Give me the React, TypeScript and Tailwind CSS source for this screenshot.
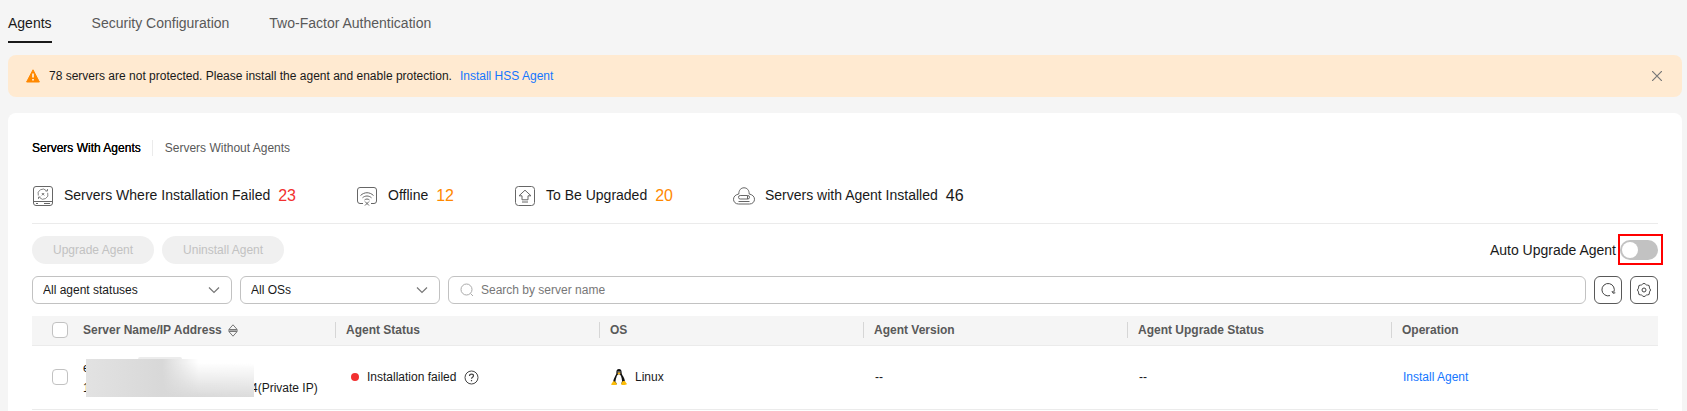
import React, { useState } from "react";

const TABS = ["Agents", "Security Configuration", "Two-Factor Authentication"];

const STATS = [
  { label: "Servers Where Installation Failed", count: 23, color: "text-[#f23030]", icon: "failed" },
  { label: "Offline", count: 12, color: "text-[#ff8800]", icon: "offline" },
  { label: "To Be Upgraded", count: 20, color: "text-[#ff8800]", icon: "upgrade" },
  { label: "Servers with Agent Installed", count: 46, color: "text-[#191919]", icon: "cloud" },
];

const COLUMNS = ["Agent Status", "OS", "Agent Version", "Agent Upgrade Status", "Operation"];

function StatIcon({ name }: { name: string }) {
  return (
    <svg width="22" height="22" viewBox="0 0 22 22" fill="none" stroke="#666" className="shrink-0">
      {name === "failed" && (
        <>
          <rect x="1.5" y="1.5" width="19" height="19" rx="2.5" />
          <path d="M1.5 16.5h19M4 18.5h2M12 18.5h6" />
          <path d="M6.300 10.500a4.800 4.800 0 0 1 8.200-4.700M15.700 7.800a4.800 4.800 0 0 1-8.200 4.700M15.500 4v2h-2M6.500 14v-2h2" strokeWidth="0.8" />
          <path d="M9.800 8l2.400 2.400M12.200 8l-2.400 2.400" strokeWidth="0.9" />
        </>
      )}
      {name === "offline" && (
        <>
          <path d="M7 18.5H4A2.5 2.5 0 0 1 1.5 16V5A2.5 2.5 0 0 1 4 2.5h14A2.5 2.5 0 0 1 20.5 5v11a2.5 2.5 0 0 1-2.5 2.5h-3" />
          <path d="M4.5 10.5c4-3.700 9-3.700 13 0M6.500 12.800c2.800-2.400 6.200-2.400 9 0M8.500 15c1.500-1.300 3.500-1.300 5 0" />
          <path d="M9 16.5l4 4M13 16.5l-4 4" />
        </>
      )}
      {name === "upgrade" && (
        <>
          <rect x="1.5" y="1.5" width="19" height="19" rx="3" />
          <path d="M11 5.2l6 5.600h-3v4H8v-4H5z" strokeLinejoin="round" />
          <path d="M8 17h6" />
        </>
      )}
      {name === "cloud" && (
        <>
          <path d="M5.800 9C5.800 5 8 2.800 11 2.800S16.200 5 16.200 9c3 .6 5.300 2.400 5.300 5.200 0 2.700-2 4.800-5 4.800h-11c-3 0-5-2.100-5-4.800C.5 11.400 2.800 9.600 5.800 9z" />
          <rect x="5.500" y="10.500" width="11" height="3.500" rx="1.700" />
          <path d="M5.500 16.500h11M14.500 11v3" />
        </>
      )}
    </svg>
  );
}

function Tux() {
  return (
    <svg width="16" height="16" viewBox="0 0 16 16" className="shrink-0">
      <path d="M8 0C6 0 5.300 1.400 5.400 3.200c.1 1.700-.5 2.600-1.400 4.200C3 9.200 2.300 11.200 2.200 13L5 15.500l1.500-1h3.600l1.500 1 2.300-2.700c0-2-.8-4-1.900-5.800-.8-1.300-1.400-2.200-1.400-3.800C10.600 1.400 10 0 8 0z" fill="#111" />
      <path d="M8 5.300c-1 0-1.600.6-2.200 2C5.100 9 4.600 10.600 4.500 12.200L6.300 16h3.600l1.200-3.900c-.1-1.700-.6-3.300-1.100-4.800C9.500 6 9 5.300 8 5.300z" fill="#fff" />
      <path d="M6.300 4.200L8 3.300l1.700.9L8 5.800z" fill="#fdb813" />
      <circle cx="7.100" cy="2.900" r=".6" fill="#ddd" />
      <circle cx="8.900" cy="2.900" r=".6" fill="#ddd" />
      <path d="M2.300 12c1 0 1.900.9 2.600 1.600.8.900 1.500 1.800.6 2.200-1 .4-4 .3-5.500 0 .3-1.100 1.200-1.900 2.300-3.800zM11.500 12.300c.6-.3 2.200-.4 2.600 0 .3.800 1.100 1.700 1.900 2.600-.8 1-3.500 1.200-5 1.100-.7-.1-1-.6-.6-1.400z" fill="#fbbc09" />
    </svg>
  );
}

function FilterSelect({ label, option }: { label: string; option: string }) {
  return (
    <div className="relative w-[200px] shrink-0">
      <select aria-label={label} className="h-7 w-full appearance-none rounded-md border border-[#c2c2c2] bg-white px-2.5 text-xs text-[#191919]">
        <option>{option}</option>
      </select>
      <svg width="12" height="12" viewBox="0 0 12 12" fill="none" stroke="#777" strokeWidth="1.200" className="pointer-events-none absolute top-2 right-3">
        <path d="M1 3.500l5 5 5-5" />
      </svg>
    </div>
  );
}

function CheckBox({ label }: { label: string }) {
  return (
    <input type="checkbox" aria-label={label} className="block size-4 appearance-none rounded-[4px] border border-[#c2c2c2] bg-white checked:bg-[#191919]" />
  );
}

export default function App() {
  const [showBanner, setShowBanner] = useState(true);
  const [autoUpgrade, setAutoUpgrade] = useState(false);

  return (
    <div className="flex min-h-screen flex-col bg-[#f5f5f5] pr-[5px] pl-2 font-['Liberation_Sans',Arial,sans-serif] text-xs text-[#191919]">
      <nav className="flex gap-10 text-sm">
        {TABS.map((tab, idx) => (
          <a
            key={tab}
            href="#"
            className={idx === 0 ? "border-b-2 border-[#191919] pt-[13px] pb-2" : "pt-[13px] pb-2 text-[#595959]"}
          >
            {tab}
          </a>
        ))}
      </nav>

      {showBanner && (
        <div className="mt-3 flex h-[42px] items-center rounded-lg bg-[#ffead1] pr-5 pl-[18px]">
          <svg width="14" height="14" viewBox="0 0 14 14" className="mr-[9px] shrink-0">
            <path d="M7 .8L13.400 13H.6z" fill="#ff8800" stroke="#ff8800" strokeLinejoin="round" />
            <path d="M7 4.500v4M7 10v1.500" stroke="#fff" strokeWidth="1.500" />
          </svg>
          <span>78 servers are not protected. Please install the agent and enable protection.</span>
          <a href="#" className="ml-2 text-[#1476ff]">Install HSS Agent</a>
          <button type="button" aria-label="Close" className="ml-auto" onClick={() => setShowBanner(false)}>
            <svg width="10" height="10" viewBox="0 0 10 10" stroke="#777" strokeWidth="1.200">
              <path d="M0 0l10 10M10 0L0 10" />
            </svg>
          </button>
        </div>
      )}

      <main className="mt-4 flex-1 rounded-t-lg bg-white px-6 pt-[27px]">
        <div className="flex h-4 items-center">
          <a href="#" className="text-black [text-shadow:0_0_0_#000]">Servers With Agents</a>
          <span className="mr-3 ml-[11px] h-4 w-px bg-[#ebebeb]" />
          <a href="#" className="text-[#595959]">Servers Without Agents</a>
        </div>

        <div className="flex h-[68px] items-center gap-[60px] border-b border-[#ebebeb] pt-3">
          {STATS.map((stat) => (
            <div key={stat.label} className="flex items-center">
              <StatIcon name={stat.icon} />
              <span className="ml-2.5 pb-0.5 text-sm">{stat.label}</span>
              <span className={`ml-2 text-base ${stat.color}`}>{stat.count}</span>
            </div>
          ))}
        </div>

        <div className="mt-3 flex items-center gap-2">
          <button type="button" disabled className="h-7 rounded-full bg-[#f0f0f0] px-[21px] text-[#c2c2c2]">Upgrade Agent</button>
          <button type="button" disabled className="h-7 rounded-full bg-[#f0f0f0] px-[21px] text-[#c2c2c2]">Uninstall Agent</button>
          <label htmlFor="auto-upgrade" className="ml-auto text-sm">Auto Upgrade Agent</label>
          <span className="relative -ml-1 flex">
            <input
              id="auto-upgrade"
              type="checkbox"
              role="switch"
              checked={autoUpgrade}
              onChange={(e) => setAutoUpgrade(e.target.checked)}
              className="h-5 w-[38px] appearance-none rounded-full bg-[#c2c2c2] p-0.5 before:block before:size-4 before:rounded-full before:bg-white checked:bg-[#191919] checked:before:ml-[18px]"
            />
            <span className="pointer-events-none absolute -top-1.5 -right-[5px] -bottom-[5px] -left-0.5 border-2 border-[#ff0000]" />
          </span>
        </div>

        <div className="mt-3 flex gap-2">
          <FilterSelect label="Agent status" option="All agent statuses" />
          <FilterSelect label="OS" option="All OSs" />
          <div className="relative flex-1">
            <svg width="14" height="14" viewBox="0 0 14 14" fill="none" stroke="#aaa" className="absolute top-[7px] left-3">
              <circle cx="6.500" cy="6.500" r="5.500" />
              <path d="M10.500 10.500l2.500 2.500" />
            </svg>
            <input type="text" aria-label="Search" placeholder="Search by server name" className="block h-7 w-full rounded-md border border-[#c2c2c2] pr-3 pl-8 placeholder:text-[#777]" />
          </div>
          <button type="button" aria-label="Refresh" className="flex size-7 items-center justify-center rounded-md border border-[#595959]">
            <svg width="16" height="16" viewBox="0 0 16 16" fill="none" stroke="#444">
              <path d="M10 13.600A6.200 6.200 0 1 1 13.700 10.400" />
              <path d="M15.300 10.800l-2.300.4-1-2.200" />
            </svg>
          </button>
          <button type="button" aria-label="Settings" className="flex size-7 items-center justify-center rounded-md border border-[#595959]">
            <svg width="16" height="16" viewBox="0 0 16 16" fill="none" stroke="#444" strokeLinejoin="round">
              <path d="M6.500 2.200Q8 .4 9.500 2.200q.8 1 2 .9 2.200-.2 1.900 2-.1 1.200.6 1.900 1.200 1 0 2-.7.700-.6 1.900.3 2.200-1.900 2-1.200-.1-2 .9Q8 15.600 6.500 13.800q-.8-1-2-.9-2.200.2-1.900-2 .1-1.200-.6-1.900-1.200-1 0-2 .7-.7.600-1.900-.3-2.200 1.900-2 1.200.1 2-.9z" />
              <circle cx="8" cy="8" r="2" />
            </svg>
          </button>
        </div>

        <table className="mt-3 w-full table-fixed text-left">
          <colgroup>
            <col className="w-10" />
            <col className="w-[263px]" />
            <col className="w-[264px]" />
            <col className="w-[264px]" />
            <col className="w-[264px]" />
            <col className="w-[264px]" />
            <col />
          </colgroup>
          <thead className="bg-[#f5f5f5] text-[#595959]">
            <tr className="h-[29px] border-b border-[#ebebeb]">
              <th className="pl-5">
                <CheckBox label="Select all servers" />
              </th>
              <th className="pl-[11px]">
                <span className="flex items-center gap-1.5">
                  Server Name/IP Address
                  <svg width="10" height="13" viewBox="0 0 10 13" fill="none" stroke="#777">
                    <path d="M.8 5.500L5 .8l4.200 4.700zM.8 7.500L5 12.200l4.200-4.700z" />
                    <path d="M0 6.500h10" stroke="#aaa" />
                  </svg>
                </span>
              </th>
              {COLUMNS.map((column) => (
                <th key={column}>
                  <span className="flex h-4 items-center border-l border-[#d6d6d6] pl-2.5">{column}</span>
                </th>
              ))}
            </tr>
          </thead>
          <tbody>
            <tr className="h-16 border-b border-[#ebebeb]">
              <td className="pl-5">
                <CheckBox label="Select server" />
              </td>
              <td className="pt-0.5 pl-[11px]">
                <div className="relative leading-5">
                  <div>e</div>
                  <div className="flex">
                    <span className="w-[168px]">1</span>
                    <span>4(Private IP)</span>
                  </div>
                  <div className="absolute top-px left-[3px] h-[38px] w-[168px] bg-linear-to-r from-[#e2e2e2] via-[#d8d8d8] via-45% to-[#dcdcdc]">
                    <div className="absolute -top-0.5 left-[52px] h-0.5 w-11 rounded-t-sm bg-[#ececec]" />
                    <div className="ml-auto h-full w-[92px] bg-linear-to-b from-white from-10% to-transparent [mask-image:linear-gradient(to_right,transparent,black_40%)]" />
                  </div>
                </div>
              </td>
              <td className="pl-4">
                <span className="flex items-center">
                  <span className="mr-2 size-2 rounded-full bg-[#f23030]" />
                  Installation failed
                  <svg width="15" height="15" viewBox="0 0 15 15" fill="none" stroke="#444" className="ml-2">
                    <circle cx="7.500" cy="7.500" r="6.500" />
                    <path d="M5.500 6c0-2.700 4-2.500 4-.2 0 1.300-2 1.500-2 3M7.500 10v1.200" strokeWidth="1.200" />
                  </svg>
                </span>
              </td>
              <td className="pl-3">
                <span className="flex items-center gap-2">
                  <Tux />
                  Linux
                </span>
              </td>
              <td className="pl-3">--</td>
              <td className="pl-3">--</td>
              <td className="pl-3">
                <a href="#" className="text-[#1476ff]">Install Agent</a>
              </td>
            </tr>
          </tbody>
        </table>
      </main>
    </div>
  );
}
